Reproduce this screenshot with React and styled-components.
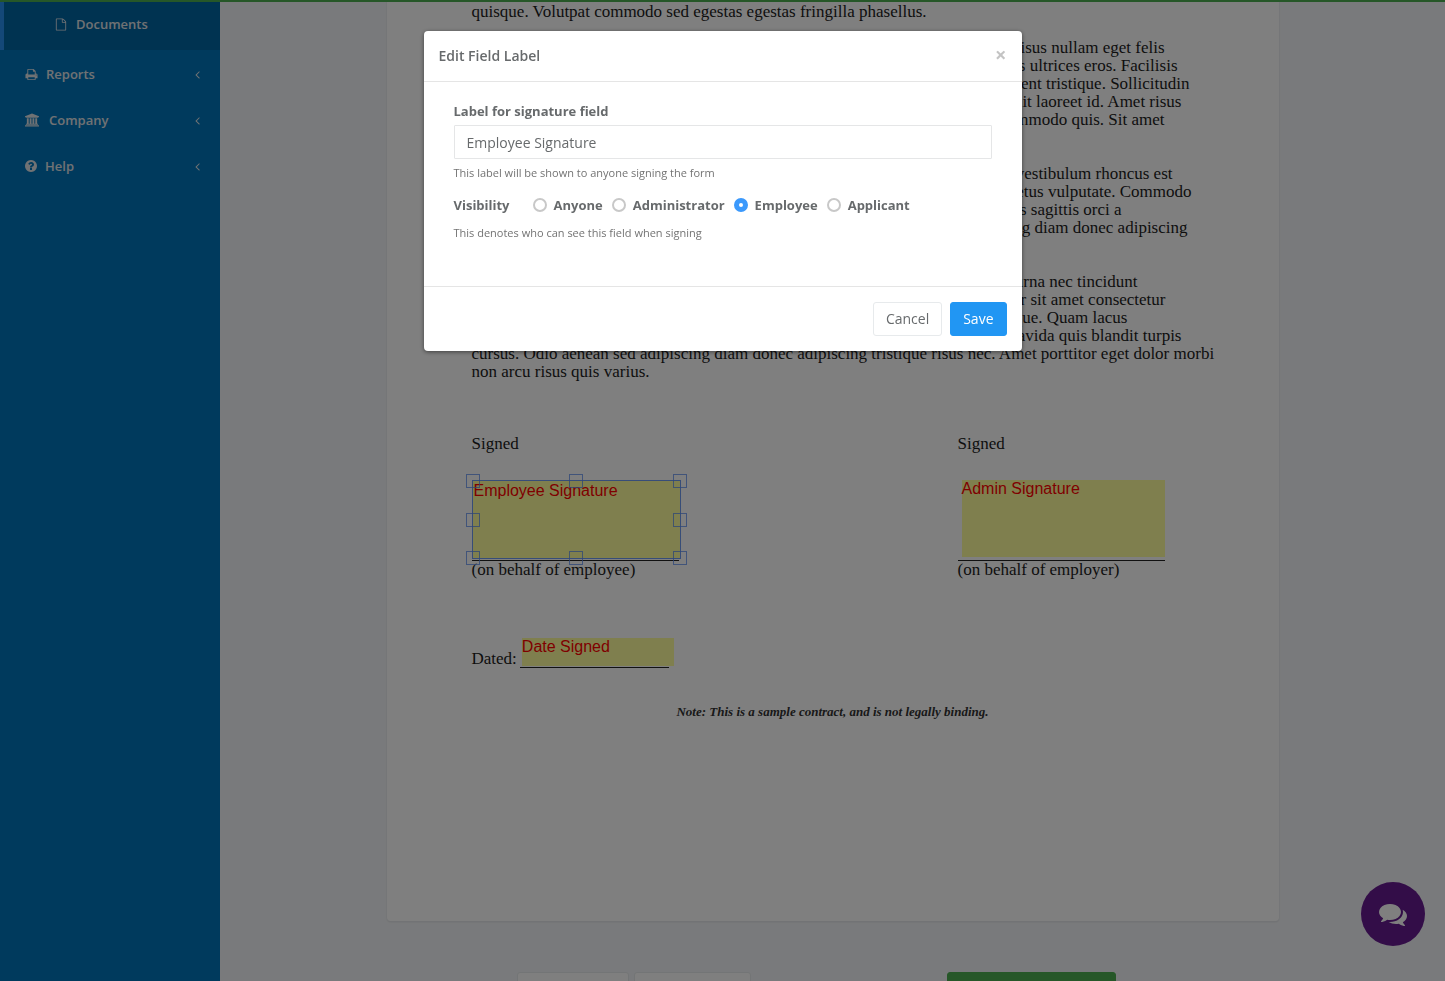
import React, { useState } from 'react';
import styled, { createGlobalStyle } from 'styled-components';

const GlobalStyle = createGlobalStyle`
  * {
    box-sizing: border-box;
  }
  body {
    margin: 0;
    color: #676a6c;
    font-family: 'Open Sans', 'Liberation Sans', sans-serif;
    font-size: 14px;
  }
  button, input {
    font-family: inherit;
    font-size: inherit;
  }
`;

const Layout = styled.div`
  display: flex;
  height: 100vh;
  overflow: hidden;
`;
const ProgressBar = styled.div`
  position: fixed;
  top: 0;
  left: 0;
  right: 0;
  height: 2px;
  background: #4caf50;
`;

// Sidebar
const Sidebar = styled.nav`
  flex: 0 0 220px;
  padding-top: 2px;
  background: #0075ba;
`;
const NavLink = styled.a`
  display: flex;
  align-items: center;
  gap: ${p => p.$gap || '10px'};
  height: ${p => p.$nested ? '48px' : '46px'};
  padding: 0 20px 4px ${p => p.$nested ? '51px' : '25px'};
  border-left: ${p => p.$nested && '4px solid #2891f0'};
  background: ${p => p.$nested && '#0066a3'};
  color: #e0e4e8;
  font-size: 13px;
  font-weight: 600;
  line-height: 20px;
  text-decoration: none;
`;
const NavList = styled.div`
  padding-top: 3px;
`;
const NavText = styled.span`
  flex: 1;
`;
const Icon = styled.svg`
  display: block;
  flex: none;
  width: ${p => p.$width}px;
  height: ${p => p.$height || p.$width}px;
  fill: currentColor;
`;

// Document
const Main = styled.main`
  flex: 1;
  min-width: 0;
  background: #f3f5f8;
`;
const Paper = styled.article`
  width: 892px;
  max-width: 100%;
  height: 922px;
  margin: 0 auto;
  padding: 3px 85px 0;
  border-bottom: 1px solid #e4e6ea;
  border-radius: 0 0 4px 4px;
  background: #fff;
  box-shadow: 0 0 2px rgba(0, 0, 0, .12);
  color: #1c1c1c;
  font-family: 'Liberation Serif', serif;
  font-size: 17px;
  line-height: 18px;
`;
const Paragraph = styled.p`
  margin: 0 0 ${p => p.$gap || 36}px;
`;
const Line = styled.span`
  display: flex;
  justify-content: ${p => p.$end ? 'flex-end' : 'flex-start'};
  width: ${p => p.$end ? `${p.$end}px` : 'auto'};
  white-space: nowrap;
`;
const Signatures = styled.div`
  display: flex;
  justify-content: space-between;
  padding-right: 29px;
`;
const SignatureBlock = styled.div`
  position: relative;
  width: 207px;
  white-space: nowrap;
`;
const SignatureRule = styled.div`
  height: 108px;
  border-bottom: 1px solid #222;
`;
const DateRow = styled.div`
  display: flex;
  align-items: flex-end;
  gap: 3px;
  height: 38px;
  margin-top: 51px;
`;
const DateBlock = styled.div`
  position: relative;
  width: 149px;
  height: 38px;
  border-bottom: 1px solid #222;
`;
const Field = styled.div`
  position: absolute;
  top: ${p => p.$top}px;
  left: ${p => p.$left}px;
  width: ${p => p.$width}px;
  height: ${p => p.$height}px;
  padding: ${p => p.$selected && '1px'};
  border: ${p => p.$selected && '1px solid #6f9bf0'};
  background: rgba(255, 255, 96, .62);
  color: #f00;
  font-family: 'Liberation Sans', sans-serif;
  font-size: 16px;
  white-space: nowrap;
`;
const Handle = styled.i`
  position: absolute;
  top: ${p => p.$y};
  left: ${p => p.$x};
  width: 14px;
  height: 14px;
  margin: -7px 0 0 -7px;
  border: 1px solid rgba(90, 140, 240, .75);
`;
const Note = styled.p`
  margin: 35px 0 0;
  color: #333;
  font-size: 13px;
  font-style: italic;
  font-weight: bold;
  text-align: center;
`;
const Actions = styled.div`
  display: flex;
  gap: 5px;
  width: 631px;
  margin: 50px auto 0;
  padding-right: 32px;
`;
const ActionButton = styled.button`
  width: ${p => p.$width}px;
  height: 34px;
  margin-left: ${p => p.$primary && 'auto'};
  border: 1px solid ${p => p.$primary ? '#4caf50' : '#e7eaec'};
  border-radius: 3px;
  background: ${p => p.$primary ? '#4caf50' : '#fff'};
`;
const ChatButton = styled.button`
  position: fixed;
  right: 20px;
  bottom: 35px;
  display: flex;
  align-items: center;
  justify-content: center;
  width: 64px;
  height: 64px;
  padding: 0;
  border: 0;
  border-radius: 50%;
  background: #661a90;
  color: #fff;
`;

// Modal
const Backdrop = styled.div`
  position: fixed;
  inset: 0;
  padding: 31px 16px;
  background: rgba(0, 0, 0, .5);
`;
const Modal = styled.form`
  max-width: 598px;
  margin: 0 auto;
  border-radius: 4px;
  background: #fff;
  box-shadow: 0 1px 4px rgba(0, 0, 0, .5);
`;
const ModalHeader = styled.header`
  display: flex;
  align-items: center;
  justify-content: space-between;
  height: 51px;
  padding: 0 15px 2px;
  border-bottom: 1px solid #e5e5e5;
`;
const Title = styled.h4`
  margin: 0;
  font-size: 14px;
  font-weight: 600;
`;
const CloseButton = styled.button`
  padding: 0;
  border: 0;
  background: none;
  color: #c4c4c4;
  font-size: 20px;
  font-weight: 700;
  line-height: 20px;
`;
const ModalBody = styled.div`
  height: 204px;
  padding: 19px 30px;
`;
const Label = styled.label`
  display: block;
  margin-bottom: 4px;
  font-size: 13px;
  font-weight: 700;
  line-height: 20px;
`;
const TextInput = styled.input`
  display: block;
  width: 100%;
  height: 34px;
  padding: 0 12px;
  border: 1px solid #e5e6e7;
  border-radius: 1px;
  background: #fff;
  color: #676a6c;
  outline: none;
`;
const Help = styled.p`
  margin: 5px 0 0;
  color: #737373;
  font-size: 11px;
  line-height: 18px;
`;
const Choices = styled.fieldset`
  display: flex;
  align-items: center;
  gap: 9px;
  margin: 13px 0 9px;
  padding: 0;
  border: 0;
  font-size: 13px;
  font-weight: 700;
  line-height: 20px;
`;
const Legend = styled.legend`
  float: left;
  padding: 0;
  margin-right: 14px;
`;
const Choice = styled.label`
  display: flex;
  align-items: center;
  gap: 7px;
`;
const Radio = styled.input`
  appearance: none;
  width: 14px;
  height: 14px;
  margin: 0;
  border: 2px solid #c8c8c8;
  border-radius: 50%;
  background: #fff;
  &:checked {
    border: 5px solid #3b99fc;
  }
`;
const ModalFooter = styled.footer`
  display: flex;
  justify-content: flex-end;
  gap: 8px;
  padding: 15px;
  border-top: 1px solid #e5e5e5;
`;
const Button = styled.button`
  height: 34px;
  padding: 0 12px 2px;
  border: 1px solid ${p => p.$primary ? '#2196f3' : '#e7eaec'};
  border-radius: 3px;
  background: ${p => p.$primary ? '#2196f3' : '#fff'};
  color: ${p => p.$primary ? '#fff' : '#676a6c'};
`;

const icons = {
  file: 'M1596 380q28 28 48 76t20 88v1152q0 40-28 68t-68 28h-1344q-40 0-68-28t-28-68v-1600q0-40 28-68t68-28h896q40 0 88 20t76 48zm-444-244v376h376q-10-29-22-41l-313-313q-12-12-41-22zm384 1528v-1024h-416q-40 0-68-28t-28-68v-416h-768v1536h1280z',
  print: 'M448 1536h896v-256h-896v256zm0-640h896v-384h-160q-40 0-68-28t-28-68v-160h-640v640zm1152 64q0-26-19-45t-45-19-45 19-19 45 19 45 45 19 45-19 19-45zm128 0v416q0 13-9.5 22.5t-22.5 9.5h-224v160q0 40-28 68t-68 28h-960q-40 0-68-28t-28-68v-160h-224q-13 0-22.5-9.5t-9.5-22.5v-416q0-79 56.5-135.5t135.5-56.5h64v-544q0-40 28-68t68-28h672q40 0 88 20t76 48l152 152q28 28 48 76t20 88v256h64q79 0 135.5 56.5t56.5 135.5z',
  bank: 'M960 0l960 384v128h-128q0 26-20.5 45t-48.5 19h-1526q-28 0-48.5-19t-20.5-45h-128v-128zM256 640h256v768h128v-768h256v768h128v-768h256v768h128v-768h256v768h59q28 0 48.5 19t20.5 45v64h-1664v-64q0-26 20.5-45t48.5-19h59v-768zM1851 1600q28 0 48.5 19t20.5 45v128h-1920v-128q0-26 20.5-45t48.5-19h1782z',
  help: 'M1024 1376v-192q0-14-9-23t-23-9h-192q-14 0-23 9t-9 23v192q0 14 9 23t23 9h192q14 0 23-9t9-23zm256-672q0-88-55.5-163t-138.5-116-170-41q-243 0-371 213-15 24 8 42l132 100q7 6 19 6 16 0 25-12 53-68 86-92 34-24 86-24 48 0 85.5 26t37.5 59q0 38-20 61t-68 45q-63 28-115.5 86.5t-52.5 125.5v36q0 14 9 23t23 9h192q14 0 23-9t9-23q0-19 21.5-49.5t54.5-49.5q32-18 49-28.5t46-35 44.5-48 28-60.5 12.5-81zm384 192q0 209-103 385.5t-279.5 279.5-385.5 103-385.5-103-279.5-279.5-103-385.5 103-385.5 279.5-279.5 385.5-103 385.5 103 279.5 279.5 103 385.5z',
  angle: 'M1203 544q0 13-10 23l-393 393 393 393q10 10 10 23t-10 23l-50 50q-10 10-23 10t-23-10l-466-466q-10-10-10-23t10-23l466-466q10-10 23-10t23 10l50 50q10 10 10 23z',
  comments: 'M1408 768q0 139-94 257t-256.5 186.5-353.5 68.5q-86 0-176-16-124 88-278 128-36 9-86 16h-3q-11 0-20.5-8t-11.5-21q-1-3-1-6.5t.5-6.5 2-6l2.5-5t3.5-5.5 4-5 4.5-5 4-4.5q5-6 23-25t26-29.5 22.5-29 25-38.5 20.5-44q-124-72-195-177t-71-224q0-139 94-257t256.5-186.5 353.5-68.5 353.5 68.5 256.5 186.5 94 257zm384 256q0 120-71 224.5t-195 176.5q10 24 20.5 44t25 38.5 22.5 29 26 29.5 23 25q1 1 4 4.5t4.5 5 4 5 3.5 5.5l2.5 5t2 6 .5 6.5-1 6.5q-3 14-13 22t-22 7q-50-7-86-16-154-40-278-128-90 16-176 16-271 0-472-132 58 4 88 4 161 0 309-45t264-129q125-92 192-212t67-254q0-77-23-152 129 71 204 178t75 230z'
};

const menu = [
  { label: 'Reports', icon: 'print', width: 13, gap: '8px' },
  { label: 'Company', icon: 'bank', width: 14, gap: '10px', viewBox: '0 0 1920 1792' },
  { label: 'Help', icon: 'help', width: 12, gap: '8px', viewBox: '128 128 1536 1536' }
];

// Each line carries the width it ends at. Lines under the modal only keep their tail.
const paragraphs = [
  [
    ['risus nullam eget felis', 693],
    ['iaculis ultrices eros. Facilisis', 706],
    ['sent tristique. Sollicitudin', 718],
    ['elit laoreet id. Amet risus', 710],
    ['commodo quis. Sit amet', 693]
  ],
  [
    ['vestibulum rhoncus est', 701],
    ['metus vulputate. Commodo', 720],
    ['ies sagittis orci a', 650],
    ['cing diam donec adipiscing', 716]
  ],
  [
    ['urna nec tincidunt', 666],
    ['tor sit amet consectetur', 694],
    ['que. Quam lacus', 656],
    ['gravida quis blandit turpis', 710],
    ['cursus. Odio aenean sed adipiscing diam donec adipiscing tristique risus nec. Amet porttitor eget dolor morbi'],
    ['non arcu risus quis varius.']
  ]
];

const handles = ['0%', '50%', '100%'].flatMap(
  y => ['0%', '50%', '100%'].map(x => [x, y])
).filter(([x, y]) => x !== '50%' || y !== '50%');

function Glyph({ name, width, height, viewBox = '0 0 1792 1792' }) {
  return (
    <Icon $width={width} $height={height} viewBox={viewBox} aria-hidden="true">
      <path d={icons[name]} />
    </Icon>
  );
}

function Contract() {
  return (
    <Paper>
      <Paragraph $gap={18}>
        <Line>quisque. Volutpat commodo sed egestas egestas fringilla phasellus.</Line>
      </Paragraph>
      {paragraphs.map((lines, idx) => (
        <Paragraph key={idx} $gap={idx === paragraphs.length - 1 ? 54 : 36}>
          {lines.map(([text, end]) => <Line $end={end} key={text}>{text}</Line>)}
        </Paragraph>
      ))}
      <Signatures>
        <SignatureBlock>
          Signed
          <SignatureRule />
          (on behalf of employee)
          <Field $selected $top={45} $left={0} $width={209} $height={79}>
            Employee Signature
            {handles.map(([x, y]) => <Handle $x={x} $y={y} key={x + y} />)}
          </Field>
        </SignatureBlock>
        <SignatureBlock>
          Signed
          <SignatureRule />
          (on behalf of employer)
          <Field $top={45} $left={4} $width={203} $height={77}>Admin Signature</Field>
        </SignatureBlock>
      </Signatures>
      <DateRow>
        <span>Dated:</span>
        <DateBlock>
          <Field $top={8} $left={2} $width={152} $height={28}>Date Signed</Field>
        </DateBlock>
      </DateRow>
      <Note>Note: This is a sample contract, and is not legally binding.</Note>
    </Paper>
  );
}

export default function App() {
  const [label, setLabel] = useState('Employee Signature');
  const [visibility, setVisibility] = useState('Employee');

  return (
    <>
      <GlobalStyle />
      <Layout>
        <Sidebar>
          <NavLink href="#documents" $nested $gap="9px">
            <Glyph name="file" width={12} height={13} />
            <NavText>Documents</NavText>
          </NavLink>
          <NavList>
            {menu.map(item => (
              <NavLink href={`#${item.label.toLowerCase()}`} $gap={item.gap} key={item.label}>
                <Glyph name={item.icon} width={item.width} viewBox={item.viewBox} />
                <NavText>{item.label}</NavText>
                <Glyph name="angle" width={5} height={13} viewBox="576 0 640 1792" />
              </NavLink>
            ))}
          </NavList>
        </Sidebar>
        <Main>
          <Contract />
          <Actions>
            <ActionButton type="button" aria-label="Back" $width={112} />
            <ActionButton type="button" aria-label="Preview" $width={117} />
            <ActionButton type="button" aria-label="Continue" $width={169} $primary />
          </Actions>
        </Main>
      </Layout>
      <ProgressBar />
      <ChatButton type="button" aria-label="Chat">
        <Glyph name="comments" width={28} />
      </ChatButton>
      <Backdrop>
        <Modal role="dialog" aria-labelledby="modal-title" onSubmit={e => e.preventDefault()}>
          <ModalHeader>
            <Title id="modal-title">Edit Field Label</Title>
            <CloseButton type="button" aria-label="Close">×</CloseButton>
          </ModalHeader>
          <ModalBody>
            <Label htmlFor="field-label">Label for signature field</Label>
            <TextInput id="field-label" value={label} onChange={e => setLabel(e.target.value)} />
            <Help>This label will be shown to anyone signing the form</Help>
            <Choices>
              <Legend>Visibility</Legend>
              {['Anyone', 'Administrator', 'Employee', 'Applicant'].map(role => (
                <Choice key={role}>
                  <Radio
                    type="radio"
                    name="visibility"
                    checked={visibility === role}
                    onChange={() => setVisibility(role)}
                  />
                  {role}
                </Choice>
              ))}
            </Choices>
            <Help>This denotes who can see this field when signing</Help>
          </ModalBody>
          <ModalFooter>
            <Button type="button">Cancel</Button>
            <Button type="submit" $primary>Save</Button>
          </ModalFooter>
        </Modal>
      </Backdrop>
    </>
  );
}
